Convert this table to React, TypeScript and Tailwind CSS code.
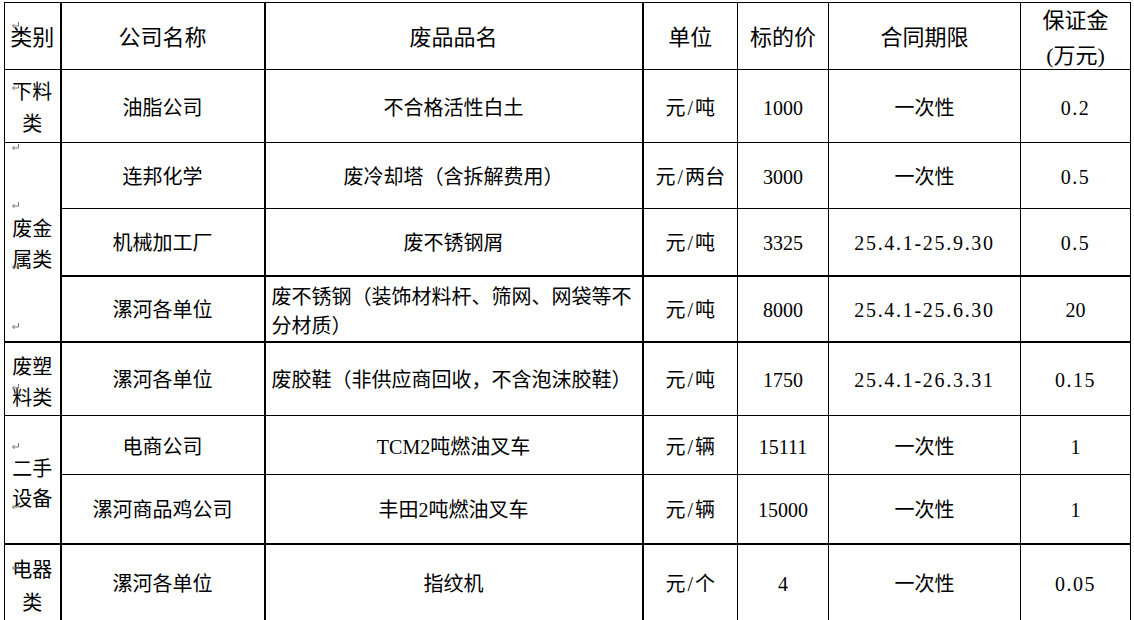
import React from "react";

const Mark = ({ top }: { top: number }) => (
  <svg
    className="absolute left-[6px]"
    style={{ top }}
    width="9"
    height="7"
    viewBox="0 0 9 7"
    fill="none"
    stroke="#777777"
    strokeWidth="1"
  >
    <path d="M7.5 0 V4 H1.5" />
    <path d="M3.5 2 L1.5 4 L3.5 6" />
  </svg>
);

const S = () => <span className="px-[2px]">/</span>;

const td = "border border-black text-center align-middle p-0 pt-[3px]";
const cat = "border border-black text-center align-middle p-0 px-[6px]";
const thick = "border-r-2";

export default function App() {
  return (
    <div
      className="w-[1134px] h-[620px] bg-white text-black pl-[4px] pt-[2px]"
      style={{ fontFamily: '"Liberation Serif", "Noto Sans CJK SC", serif' }}
    >
      <table className="border-collapse table-fixed w-[1126px] text-[20px] leading-[30px]">
        <colgroup>
          <col className="w-[56px]" />
          <col className="w-[204px]" />
          <col className="w-[378px]" />
          <col className="w-[95px]" />
          <col className="w-[91px]" />
          <col className="w-[192px]" />
          <col className="w-[110px]" />
        </colgroup>
        <tbody>
          <tr className="h-[67px] text-[22px]">
            <td className={`${td} ${thick} relative`}>
              <Mark top={19} />
              类别
            </td>
            <td className={`${td} ${thick}`}>公司名称</td>
            <td className={`${td} ${thick}`}>废品品名</td>
            <td className={td}>单位</td>
            <td className={td}>标的价</td>
            <td className={td}>合同期限</td>
            <td className="border border-black text-center align-middle p-0">
              <div className="leading-[35px] -mb-[4px]">
                保证金
                <br />
                (万元)
              </div>
            </td>
          </tr>
          <tr className="h-[73px]">
            <td className={`${cat} ${thick} relative leading-[32px] pt-[3px]`}>
              <Mark top={14} />
              下料类
            </td>
            <td className={`${td} ${thick}`}>油脂公司</td>
            <td className={`${td} ${thick}`}>不合格活性白土</td>
            <td className={td}>元<S />吨</td>
            <td className={td}>1000</td>
            <td className={td}>一次性</td>
            <td className={`${td} tracking-[1.5px]`}>0.2</td>
          </tr>
          <tr className="h-[66px]">
            <td rowSpan={3} className={`${cat} ${thick} border-b-2 relative leading-[31px] pt-[6px]`}>
              <Mark top={1} />
              <Mark top={59} />
              <Mark top={120} />
              <Mark top={180} />
              废金属类
            </td>
            <td className={`${td} ${thick}`}>连邦化学</td>
            <td className={`${td} ${thick}`}>废冷却塔（含拆解费用）</td>
            <td className={td}>元<S />两台</td>
            <td className={td}>3000</td>
            <td className={td}>一次性</td>
            <td className={`${td} tracking-[1.5px]`}>0.5</td>
          </tr>
          <tr className="h-[67px]">
            <td className={`${td} ${thick} border-b-2`}>机械加工厂</td>
            <td className={`${td} ${thick} border-b-2`}>废不锈钢屑</td>
            <td className={`${td} border-b-2`}>元<S />吨</td>
            <td className={`${td} border-b-2`}>3325</td>
            <td className={`${td} border-b-2 tracking-[1.7px]`}>25.4.1-25.9.30</td>
            <td className={`${td} border-b-2 tracking-[1.5px]`}>0.5</td>
          </tr>
          <tr className="h-[65px]">
            <td className={`${td} ${thick} border-b-2`}>漯河各单位</td>
            <td className={`${td} ${thick} border-b-2 !text-left pl-[6px] !pt-[6px] leading-[29px] whitespace-nowrap`}>
              废不锈钢（装饰材料杆、筛网、网袋等不
              <br />
              分材质）
            </td>
            <td className={`${td} border-b-2`}>元<S />吨</td>
            <td className={`${td} border-b-2`}>8000</td>
            <td className={`${td} border-b-2 tracking-[1.7px]`}>25.4.1-25.6.30</td>
            <td className={`${td} border-b-2`}>20</td>
          </tr>
          <tr className="h-[74px]">
            <td className={`${cat} ${thick} relative leading-[31px] pt-[9px]`}>
              <Mark top={41} />
              废塑料类
            </td>
            <td className={`${td} ${thick}`}>漯河各单位</td>
            <td className={`${td} ${thick} !text-left pl-[6px] whitespace-nowrap`}>
              废胶鞋（非供应商回收，不含泡沫胶鞋）
            </td>
            <td className={td}>元<S />吨</td>
            <td className={td}>1750</td>
            <td className={`${td} tracking-[1.7px]`}>25.4.1-26.3.31</td>
            <td className={`${td} tracking-[1.5px]`}>0.15</td>
          </tr>
          <tr className="h-[59px]">
            <td rowSpan={2} className={`${cat} ${thick} border-b-2 relative leading-[30px] pt-[10px]`}>
              <Mark top={27} />
              <Mark top={87} />
              二手设备
            </td>
            <td className={`${td} ${thick}`}>电商公司</td>
            <td className={`${td} ${thick}`}>TCM2吨燃油叉车</td>
            <td className={td}>元<S />辆</td>
            <td className={td}>15111</td>
            <td className={td}>一次性</td>
            <td className={td}>1</td>
          </tr>
          <tr className="h-[69px]">
            <td className={`${td} ${thick} border-b-2`}>漯河商品鸡公司</td>
            <td className={`${td} ${thick} border-b-2`}>丰田2吨燃油叉车</td>
            <td className={`${td} border-b-2`}>元<S />辆</td>
            <td className={`${td} border-b-2`}>15000</td>
            <td className={`${td} border-b-2`}>一次性</td>
            <td className={`${td} border-b-2`}>1</td>
          </tr>
          <tr className="h-[74px]">
            <td className={`${cat} ${thick} relative leading-[33px] pt-[9px]`}>
              <Mark top={19} />
              电器类
            </td>
            <td className={`${td} ${thick}`}>漯河各单位</td>
            <td className={`${td} ${thick}`}>指纹机</td>
            <td className={td}>元<S />个</td>
            <td className={td}>4</td>
            <td className={td}>一次性</td>
            <td className={`${td} tracking-[1.5px]`}>0.05</td>
          </tr>
        </tbody>
      </table>
    </div>
  );
}
